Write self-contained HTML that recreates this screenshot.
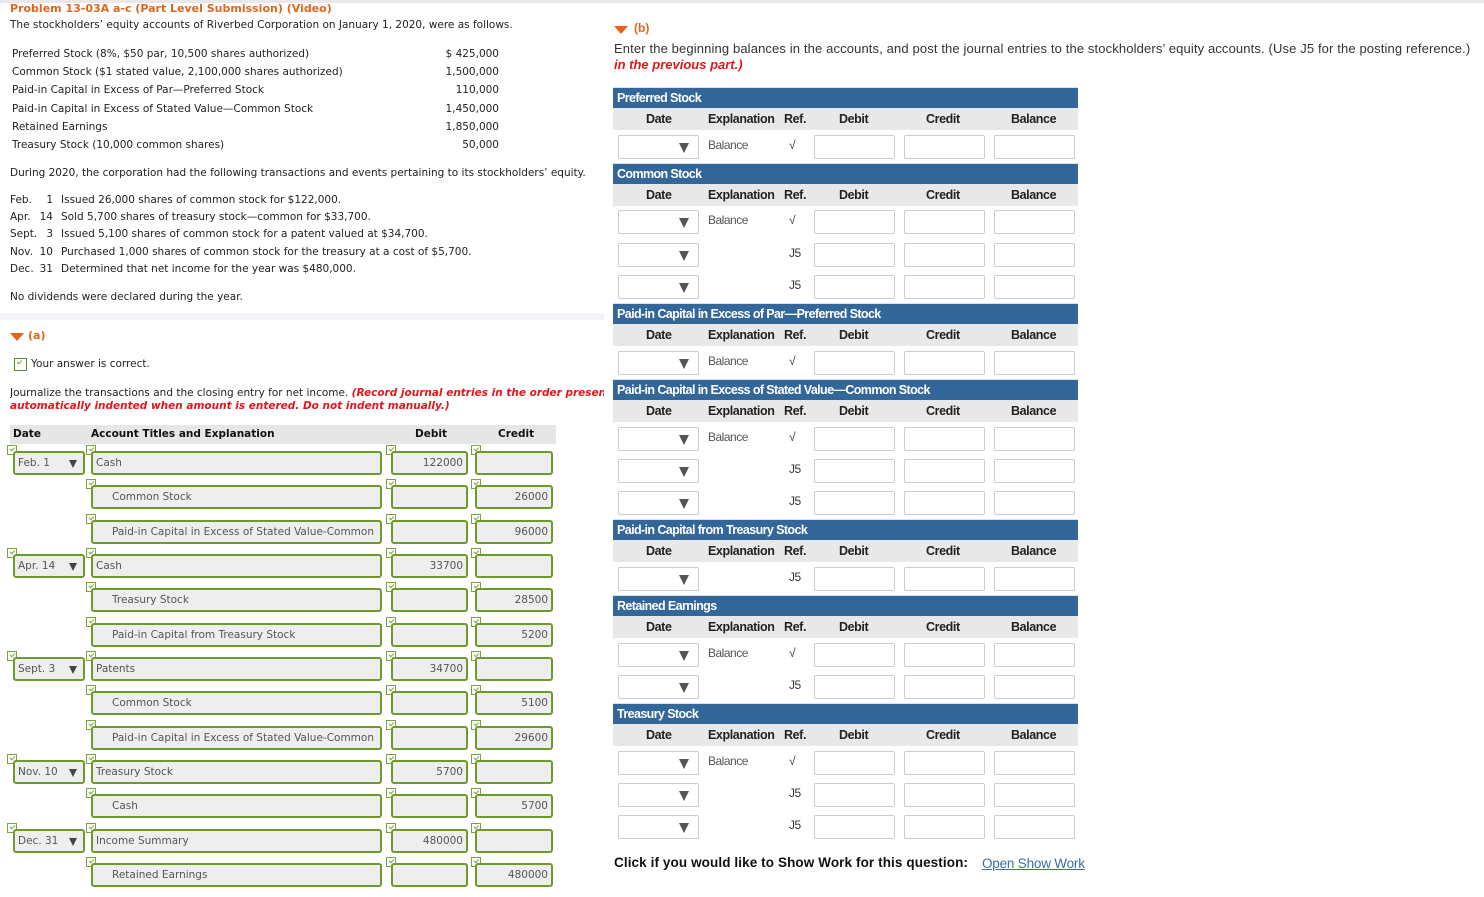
<!DOCTYPE html>
<html><head><meta charset="utf-8"><style>
*{margin:0;padding:0;box-sizing:border-box}
body{width:1484px;height:897px;background:#fff;position:relative;overflow:hidden;font-family:"DejaVu Sans","Liberation Sans",sans-serif;font-size:10.5px;color:#222}
.a{position:absolute;white-space:nowrap}
.o{color:#e0661b;font-weight:bold}
.red{color:#e8141b;font-weight:bold;font-style:italic}
.in{position:absolute;height:24px;background:#eeeeef;border:2px solid #6f9a2a;border-radius:3px;font-size:10.5px;color:#555;line-height:20px;padding:0 3px;overflow:hidden;white-space:nowrap}
.in.r{text-align:right}
.ck{position:absolute;width:10px;height:10px;border:1px solid #7aa33a;background:#fff}
.ck:after{content:"";position:absolute;left:2px;top:1px;width:4px;height:2px;border-left:1.5px solid #7aa33a;border-bottom:1.5px solid #7aa33a;transform:rotate(-45deg)}
.tri{position:absolute;width:0;height:0;border-left:4px solid transparent;border-right:4px solid transparent;border-top:8px solid #444}
.R{font-family:"Liberation Sans",sans-serif;font-size:13px}
.bar{position:absolute;left:613px;width:465px;height:21px;background:#336799;color:#fff;font-weight:bold;font-family:"Liberation Sans",sans-serif;font-size:12.5px;letter-spacing:-.6px;line-height:21px;padding-left:4px;border-top:1px solid #dde}
.ch{position:absolute;left:613px;width:465px;height:22px;background:#e8e8e8;font-family:"Liberation Sans",sans-serif;font-weight:bold;font-size:12.5px;letter-spacing:-.4px;color:#222}
.ch span{position:absolute;top:4px}
.sel{position:absolute;left:618px;width:81px;height:24px;border:1px solid #ccc;border-radius:2px;background:#fff}
.sel .tri{left:60px;top:7px;border-left-width:5px;border-right-width:5px;border-top-width:10px;border-top-color:#555}
.bx{position:absolute;width:81px;height:24px;border:1px solid #ccc;border-radius:2px;background:#fff}
.ex{position:absolute;left:708px;font-family:"Liberation Sans",sans-serif;font-size:12px;color:#555;letter-spacing:-.5px}
.rf{position:absolute;left:789px;font-family:"Liberation Sans",sans-serif;font-size:12px;color:#333;letter-spacing:-.5px}
</style></head><body>
<div class="a" style="left:0;top:0;width:1484px;height:3px;background:#e8e8e8"></div>
<div class="a o" style="left:10px;top:2px;font-size:11px">Problem 13-03A a-c (Part Level Submission) (Video)</div>
<div class="a" style="left:10px;top:19px">The stockholders’ equity accounts of Riverbed Corporation on January 1, 2020, were as follows.</div>
<div class="a" style="left:12px;top:45px;line-height:18.2px">Preferred Stock (8%, $50 par, 10,500 shares authorized)<br>Common Stock ($1 stated value, 2,100,000 shares authorized)<br>Paid-in Capital in Excess of Par—Preferred Stock<br>Paid-in Capital in Excess of Stated Value—Common Stock<br>Retained Earnings<br>Treasury Stock (10,000 common shares)</div>
<div class="a" style="left:420px;width:79px;top:45px;line-height:18.2px;text-align:right">$ 425,000<br>1,500,000<br>110,000<br>1,450,000<br>1,850,000<br>50,000</div>
<div class="a" style="left:10px;top:167px">During 2020, the corporation had the following transactions and events pertaining to its stockholders’ equity.</div>
<div class="a" style="left:10px;top:192px;line-height:17.2px">Feb.<br>Apr.<br>Sept.<br>Nov.<br>Dec.</div>
<div class="a" style="left:37px;width:16px;top:192px;line-height:17.2px;text-align:right">1<br>14<br>3<br>10<br>31</div>
<div class="a" style="left:61px;top:192px;line-height:17.2px">Issued 26,000 shares of common stock for $122,000.<br>Sold 5,700 shares of treasury stock—common for $33,700.<br>Issued 5,100 shares of common stock for a patent valued at $34,700.<br>Purchased 1,000 shares of common stock for the treasury at a cost of $5,700.<br>Determined that net income for the year was $480,000.</div>
<div class="a" style="left:10px;top:291px">No dividends were declared during the year.</div>
<div class="a" style="left:0;top:313px;width:604px;height:7px;background:#f2f4f7"></div>
<div class="a" style="left:10px;top:333px;width:0;height:0;border-left:7px solid transparent;border-right:7px solid transparent;border-top:8px solid #e8601a"></div>
<div class="a o" style="left:28px;top:329px;font-size:11px">(a)</div>
<div class="ck" style="left:14px;top:358px;width:13px;height:13px;border-color:#5a8a2a"></div>
<div class="a" style="left:31px;top:358px">Your answer is correct.</div>
<div class="a" style="left:10px;top:387px;width:594px;overflow:hidden">Journalize the transactions and the closing entry for net income. <span class="red">(Record journal entries in the order presented in the problem.</span></div>
<div class="a red" style="left:10px;top:400px">automatically indented when amount is entered. Do not indent manually.)</div>
<div class="a" style="left:10px;top:425px;width:546px;height:19px;background:#e6e6e6;font-weight:bold;color:#111">
<span class="a" style="left:3px;top:3px">Date</span><span class="a" style="left:81px;top:3px">Account Titles and Explanation</span><span class="a" style="left:405px;top:3px">Debit</span><span class="a" style="left:488px;top:3px">Credit</span></div>

<div class="ck" style="left:7px;top:445px"></div><div class="in" style="left:13px;top:451px;width:72px">Feb. 1<span class="tri" style="left:54px;top:7px"></span></div>
<div class="ck" style="left:86px;top:445px"></div><div class="in" style="left:91px;top:451px;width:291px">Cash</div>
<div class="ck" style="left:386px;top:445px"></div><div class="in r" style="left:391px;top:451px;width:77px">122000</div>
<div class="ck" style="left:471px;top:445px"></div><div class="in r" style="left:475px;top:451px;width:78px"></div>

<div class="ck" style="left:86px;top:479px"></div><div class="in" style="left:91px;top:485px;width:291px;padding-left:19px">Common Stock</div>
<div class="ck" style="left:386px;top:479px"></div><div class="in r" style="left:391px;top:485px;width:77px"></div>
<div class="ck" style="left:471px;top:479px"></div><div class="in r" style="left:475px;top:485px;width:78px">26000</div>

<div class="ck" style="left:86px;top:514px"></div><div class="in" style="left:91px;top:520px;width:291px;padding-left:19px">Paid-in Capital in Excess of Stated Value-Common</div>
<div class="ck" style="left:386px;top:514px"></div><div class="in r" style="left:391px;top:520px;width:77px"></div>
<div class="ck" style="left:471px;top:514px"></div><div class="in r" style="left:475px;top:520px;width:78px">96000</div>

<div class="ck" style="left:7px;top:548px"></div><div class="in" style="left:13px;top:554px;width:72px">Apr. 14<span class="tri" style="left:54px;top:7px"></span></div>
<div class="ck" style="left:86px;top:548px"></div><div class="in" style="left:91px;top:554px;width:291px">Cash</div>
<div class="ck" style="left:386px;top:548px"></div><div class="in r" style="left:391px;top:554px;width:77px">33700</div>
<div class="ck" style="left:471px;top:548px"></div><div class="in r" style="left:475px;top:554px;width:78px"></div>

<div class="ck" style="left:86px;top:582px"></div><div class="in" style="left:91px;top:588px;width:291px;padding-left:19px">Treasury Stock</div>
<div class="ck" style="left:386px;top:582px"></div><div class="in r" style="left:391px;top:588px;width:77px"></div>
<div class="ck" style="left:471px;top:582px"></div><div class="in r" style="left:475px;top:588px;width:78px">28500</div>

<div class="ck" style="left:86px;top:617px"></div><div class="in" style="left:91px;top:623px;width:291px;padding-left:19px">Paid-in Capital from Treasury Stock</div>
<div class="ck" style="left:386px;top:617px"></div><div class="in r" style="left:391px;top:623px;width:77px"></div>
<div class="ck" style="left:471px;top:617px"></div><div class="in r" style="left:475px;top:623px;width:78px">5200</div>

<div class="ck" style="left:7px;top:651px"></div><div class="in" style="left:13px;top:657px;width:72px">Sept. 3<span class="tri" style="left:54px;top:7px"></span></div>
<div class="ck" style="left:86px;top:651px"></div><div class="in" style="left:91px;top:657px;width:291px">Patents</div>
<div class="ck" style="left:386px;top:651px"></div><div class="in r" style="left:391px;top:657px;width:77px">34700</div>
<div class="ck" style="left:471px;top:651px"></div><div class="in r" style="left:475px;top:657px;width:78px"></div>

<div class="ck" style="left:86px;top:685px"></div><div class="in" style="left:91px;top:691px;width:291px;padding-left:19px">Common Stock</div>
<div class="ck" style="left:386px;top:685px"></div><div class="in r" style="left:391px;top:691px;width:77px"></div>
<div class="ck" style="left:471px;top:685px"></div><div class="in r" style="left:475px;top:691px;width:78px">5100</div>

<div class="ck" style="left:86px;top:720px"></div><div class="in" style="left:91px;top:726px;width:291px;padding-left:19px">Paid-in Capital in Excess of Stated Value-Common</div>
<div class="ck" style="left:386px;top:720px"></div><div class="in r" style="left:391px;top:726px;width:77px"></div>
<div class="ck" style="left:471px;top:720px"></div><div class="in r" style="left:475px;top:726px;width:78px">29600</div>

<div class="ck" style="left:7px;top:754px"></div><div class="in" style="left:13px;top:760px;width:72px">Nov. 10<span class="tri" style="left:54px;top:7px"></span></div>
<div class="ck" style="left:86px;top:754px"></div><div class="in" style="left:91px;top:760px;width:291px">Treasury Stock</div>
<div class="ck" style="left:386px;top:754px"></div><div class="in r" style="left:391px;top:760px;width:77px">5700</div>
<div class="ck" style="left:471px;top:754px"></div><div class="in r" style="left:475px;top:760px;width:78px"></div>

<div class="ck" style="left:86px;top:788px"></div><div class="in" style="left:91px;top:794px;width:291px;padding-left:19px">Cash</div>
<div class="ck" style="left:386px;top:788px"></div><div class="in r" style="left:391px;top:794px;width:77px"></div>
<div class="ck" style="left:471px;top:788px"></div><div class="in r" style="left:475px;top:794px;width:78px">5700</div>

<div class="ck" style="left:7px;top:823px"></div><div class="in" style="left:13px;top:829px;width:72px">Dec. 31<span class="tri" style="left:54px;top:7px"></span></div>
<div class="ck" style="left:86px;top:823px"></div><div class="in" style="left:91px;top:829px;width:291px">Income Summary</div>
<div class="ck" style="left:386px;top:823px"></div><div class="in r" style="left:391px;top:829px;width:77px">480000</div>
<div class="ck" style="left:471px;top:823px"></div><div class="in r" style="left:475px;top:829px;width:78px"></div>

<div class="ck" style="left:86px;top:857px"></div><div class="in" style="left:91px;top:863px;width:291px;padding-left:19px">Retained Earnings</div>
<div class="ck" style="left:386px;top:857px"></div><div class="in r" style="left:391px;top:863px;width:77px"></div>
<div class="ck" style="left:471px;top:857px"></div><div class="in r" style="left:475px;top:863px;width:78px">480000</div>

<div class="a" style="left:614px;top:26px;width:0;height:0;border-left:7px solid transparent;border-right:7px solid transparent;border-top:8px solid #e8601a"></div>
<div class="a o" style="left:634px;top:21px;font-size:12px;font-family:'Liberation Sans',sans-serif">(b)</div>
<div class="a R" style="left:614px;top:41px;color:#333;letter-spacing:.13px">Enter the beginning balances in the accounts, and post the journal entries to the stockholders’ equity accounts. (Use J5 for the posting reference.)</div>
<div class="a R red" style="left:614px;top:57px;font-size:13px">in the previous part.)</div>

<div class="bar" style="top:87px">Preferred Stock</div>
<div class="ch" style="top:108px"><span style="left:33px">Date</span><span style="left:95px">Explanation</span><span style="left:171px">Ref.</span><span style="left:226px">Debit</span><span style="left:313px">Credit</span><span style="left:398px">Balance</span></div>
<div class="sel" style="top:135px"><span class="tri"></span></div><div class="ex" style="top:138px">Balance</div><div class="rf" style="top:138px">√</div>
<div class="bx" style="left:814px;top:135px"></div><div class="bx" style="left:904px;top:135px"></div><div class="bx" style="left:994px;top:135px"></div>

<div class="bar" style="top:163px">Common Stock</div>
<div class="ch" style="top:184px"><span style="left:33px">Date</span><span style="left:95px">Explanation</span><span style="left:171px">Ref.</span><span style="left:226px">Debit</span><span style="left:313px">Credit</span><span style="left:398px">Balance</span></div>
<div class="sel" style="top:210px"><span class="tri"></span></div><div class="ex" style="top:213px">Balance</div><div class="rf" style="top:213px">√</div>
<div class="bx" style="left:814px;top:210px"></div><div class="bx" style="left:904px;top:210px"></div><div class="bx" style="left:994px;top:210px"></div>
<div class="sel" style="top:243px"><span class="tri"></span></div><div class="rf" style="top:246px">J5</div>
<div class="bx" style="left:814px;top:243px"></div><div class="bx" style="left:904px;top:243px"></div><div class="bx" style="left:994px;top:243px"></div>
<div class="sel" style="top:275px"><span class="tri"></span></div><div class="rf" style="top:278px">J5</div>
<div class="bx" style="left:814px;top:275px"></div><div class="bx" style="left:904px;top:275px"></div><div class="bx" style="left:994px;top:275px"></div>

<div class="bar" style="top:303px">Paid-in Capital in Excess of Par—Preferred Stock</div>
<div class="ch" style="top:324px"><span style="left:33px">Date</span><span style="left:95px">Explanation</span><span style="left:171px">Ref.</span><span style="left:226px">Debit</span><span style="left:313px">Credit</span><span style="left:398px">Balance</span></div>
<div class="sel" style="top:351px"><span class="tri"></span></div><div class="ex" style="top:354px">Balance</div><div class="rf" style="top:354px">√</div>
<div class="bx" style="left:814px;top:351px"></div><div class="bx" style="left:904px;top:351px"></div><div class="bx" style="left:994px;top:351px"></div>

<div class="bar" style="top:379px">Paid-in Capital in Excess of Stated Value—Common Stock</div>
<div class="ch" style="top:400px"><span style="left:33px">Date</span><span style="left:95px">Explanation</span><span style="left:171px">Ref.</span><span style="left:226px">Debit</span><span style="left:313px">Credit</span><span style="left:398px">Balance</span></div>
<div class="sel" style="top:427px"><span class="tri"></span></div><div class="ex" style="top:430px">Balance</div><div class="rf" style="top:430px">√</div>
<div class="bx" style="left:814px;top:427px"></div><div class="bx" style="left:904px;top:427px"></div><div class="bx" style="left:994px;top:427px"></div>
<div class="sel" style="top:459px"><span class="tri"></span></div><div class="rf" style="top:462px">J5</div>
<div class="bx" style="left:814px;top:459px"></div><div class="bx" style="left:904px;top:459px"></div><div class="bx" style="left:994px;top:459px"></div>
<div class="sel" style="top:491px"><span class="tri"></span></div><div class="rf" style="top:494px">J5</div>
<div class="bx" style="left:814px;top:491px"></div><div class="bx" style="left:904px;top:491px"></div><div class="bx" style="left:994px;top:491px"></div>

<div class="bar" style="top:519px">Paid-in Capital from Treasury Stock</div>
<div class="ch" style="top:540px"><span style="left:33px">Date</span><span style="left:95px">Explanation</span><span style="left:171px">Ref.</span><span style="left:226px">Debit</span><span style="left:313px">Credit</span><span style="left:398px">Balance</span></div>
<div class="sel" style="top:567px"><span class="tri"></span></div><div class="rf" style="top:570px">J5</div>
<div class="bx" style="left:814px;top:567px"></div><div class="bx" style="left:904px;top:567px"></div><div class="bx" style="left:994px;top:567px"></div>

<div class="bar" style="top:595px">Retained Earnings</div>
<div class="ch" style="top:616px"><span style="left:33px">Date</span><span style="left:95px">Explanation</span><span style="left:171px">Ref.</span><span style="left:226px">Debit</span><span style="left:313px">Credit</span><span style="left:398px">Balance</span></div>
<div class="sel" style="top:643px"><span class="tri"></span></div><div class="ex" style="top:646px">Balance</div><div class="rf" style="top:646px">√</div>
<div class="bx" style="left:814px;top:643px"></div><div class="bx" style="left:904px;top:643px"></div><div class="bx" style="left:994px;top:643px"></div>
<div class="sel" style="top:675px"><span class="tri"></span></div><div class="rf" style="top:678px">J5</div>
<div class="bx" style="left:814px;top:675px"></div><div class="bx" style="left:904px;top:675px"></div><div class="bx" style="left:994px;top:675px"></div>

<div class="bar" style="top:703px">Treasury Stock</div>
<div class="ch" style="top:724px"><span style="left:33px">Date</span><span style="left:95px">Explanation</span><span style="left:171px">Ref.</span><span style="left:226px">Debit</span><span style="left:313px">Credit</span><span style="left:398px">Balance</span></div>
<div class="sel" style="top:751px"><span class="tri"></span></div><div class="ex" style="top:754px">Balance</div><div class="rf" style="top:754px">√</div>
<div class="bx" style="left:814px;top:751px"></div><div class="bx" style="left:904px;top:751px"></div><div class="bx" style="left:994px;top:751px"></div>
<div class="sel" style="top:783px"><span class="tri"></span></div><div class="rf" style="top:786px">J5</div>
<div class="bx" style="left:814px;top:783px"></div><div class="bx" style="left:904px;top:783px"></div><div class="bx" style="left:994px;top:783px"></div>
<div class="sel" style="top:815px"><span class="tri"></span></div><div class="rf" style="top:818px">J5</div>
<div class="bx" style="left:814px;top:815px"></div><div class="bx" style="left:904px;top:815px"></div><div class="bx" style="left:994px;top:815px"></div>

<div class="a R" style="left:614px;top:855px;font-weight:bold;font-size:13.5px;color:#111;letter-spacing:.1px">Click if you would like to Show Work for this question:</div>
<div class="a R" style="left:982px;top:856px;color:#3a6ea5;text-decoration:underline;font-size:13.5px;letter-spacing:-.2px">Open Show Work</div>
</body></html>
